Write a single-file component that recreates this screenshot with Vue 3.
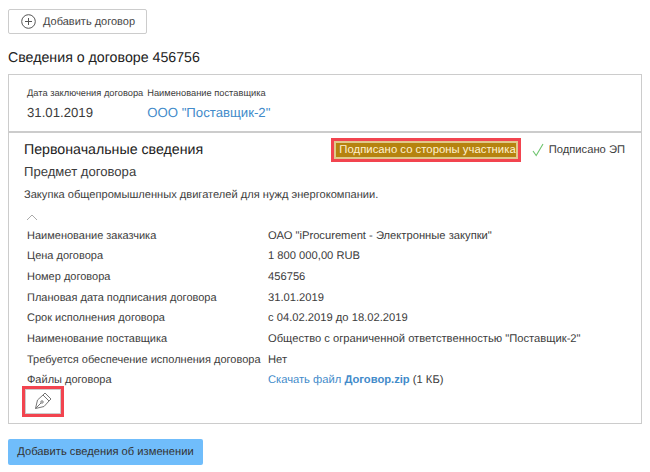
<template>
  <div class="page">
    <button class="add-btn">
      <svg class="plus" width="15" height="15" viewBox="0 0 15 15">
        <circle cx="7.5" cy="7.5" r="6.8" fill="none" stroke="#555" stroke-width="1" />
        <path d="M7.5 4v7M4 7.5h7" stroke="#555" stroke-width="1" fill="none" />
      </svg>
      <span>Добавить договор</span>
    </button>

    <h2 class="title">Сведения о договоре 456756</h2>

    <div class="card">
      <div class="head">
        <div class="head-col">
          <div class="head-label">Дата заключения договора</div>
          <div class="head-value">31.01.2019</div>
        </div>
        <div class="head-col">
          <div class="head-label">Наименование поставщика</div>
          <div class="head-value link">ООО "Поставщик-2"</div>
        </div>
      </div>

      <div class="body">
        <div class="status-row">
          <div class="section-title">Первоначальные сведения</div>
          <div class="status-right">
            <div class="mark-red">
              <span class="badge">Подписано со стороны участника</span>
            </div>
            <svg class="check" width="12" height="14" viewBox="0 0 12 14">
              <path d="M1 8l3.200 4.500L11 1" fill="none" stroke="#6fc46f" stroke-width="1.100" />
            </svg>
            <span class="signed">Подписано ЭП</span>
          </div>
        </div>

        <div class="subject-title">Предмет договора</div>
        <div class="subject">Закупка общепромышленных двигателей для нужд энергокомпании.</div>

        <svg class="chevron" width="12" height="7" viewBox="0 0 12 7">
          <path d="M1 6l5-5 5 5" fill="none" stroke="#aaa" stroke-width="1" />
        </svg>

        <div class="rows">
          <div v-for="row in rows" :key="row.label" class="row">
            <div class="row-label">{{ row.label }}</div>
            <div class="row-value">{{ row.value }}</div>
          </div>
          <div class="row">
            <div class="row-label">Файлы договора</div>
            <div class="row-value">
              <span class="file-link">Скачать файл <b>Договор.zip</b></span> (1 КБ)
            </div>
          </div>
        </div>

        <div class="pen-box">
          <svg width="18" height="18" viewBox="0 0 18 18">
            <g fill="none" stroke="#777" stroke-width="1">
              <path d="M1.500 16.500L3.500 8L9 3l6 6-5 5.500z" />
              <path d="M9 3l2-2 6 6-2 2" />
              <path d="M1.500 16.500L7 11" />
              <circle cx="8" cy="10" r="1.200" />
            </g>
          </svg>
        </div>
      </div>
    </div>

    <button class="bottom-btn">Добавить сведения об изменении</button>
  </div>
</template>

<script setup>
const rows = [
  { label: 'Наименование заказчика', value: 'ОАО "iProcurement - Электронные закупки"' },
  { label: 'Цена договора', value: '1 800 000,00 RUB' },
  { label: 'Номер договора', value: '456756' },
  { label: 'Плановая дата подписания договора', value: '31.01.2019' },
  { label: 'Срок исполнения договора', value: 'с 04.02.2019 до 18.02.2019' },
  { label: 'Наименование поставщика', value: 'Общество с ограниченной ответственностью "Поставщик-2"' },
  { label: 'Требуется обеспечение исполнения договора', value: 'Нет' }
]
</script>

<style>
body {
  background: #fff;
}
</style>

<style scoped>
.page {
  width: 650px;
  height: 472px;
  overflow: hidden;
  box-sizing: border-box;
  padding: 9px 8px 0;
  font-family: "Liberation Sans", Arial, sans-serif;
  text-rendering: geometricPrecision;
  color: #3c3c3c;
}

.add-btn {
  display: flex;
  align-items: center;
  gap: 7px;
  width: 139px;
  height: 25px;
  padding: 0 0 0 12px;
  box-sizing: border-box;
  background: #fff;
  border: 1px solid #ccc;
  border-radius: 2px;
  font: 11px "Liberation Sans", Arial, sans-serif;
  text-rendering: geometricPrecision;
  color: #444;
  white-space: nowrap;
}

.title {
  margin: 16px 0 0;
  font-size: 14.2px;
  font-weight: normal;
  line-height: 16px;
  color: #222;
}

.card {
  margin-top: 8px;
  width: 634px;
  height: 350px;
  box-sizing: border-box;
  border: 1px solid #ccc;
}

.head {
  display: flex;
  gap: 4px;
  height: 58px;
  box-sizing: border-box;
  padding: 11px 0 0 18px;
  border-bottom: 2px solid #ccc;
}

.head-label {
  font-size: 9.3px;
  line-height: 14px;
}

.head-value {
  margin-top: 5px;
  font-size: 13.2px;
  line-height: 16px;
}

.link {
  color: #428bca;
}

.body {
  padding: 0 16px 0 15px;
}

.status-row {
  display: flex;
  justify-content: space-between;
  align-items: center;
  height: 33px;
}

.section-title {
  font-size: 14.2px;
  color: #222;
}

.status-right {
  display: flex;
  align-items: center;
}

.mark-red {
  border: 3px solid #f2444f;
}

.badge {
  display: block;
  background: #b5830f;
  border: 2px solid #e0c98a;
  color: #fff2d0;
  font-size: 11.35px;
  line-height: 14px;
  padding: 0 0 0 3px;
}

.check {
  margin-left: 11px;
}

.signed {
  margin-left: 5px;
  font-size: 11.2px;
}

.subject-title {
  font-size: 13.1px;
  line-height: 15px;
  margin-top: -2px;
}

.subject {
  margin-top: 9px;
  font-size: 11.1px;
  line-height: 14px;
}

.chevron {
  display: block;
  margin: 12px 0 0 2px;
}

.rows {
  margin-top: 4.300px;
}

.row {
  display: flex;
  height: 20.7px;
  align-items: center;
  padding-left: 3px;
  font-size: 11.2px;
  white-space: nowrap;
}

.row-label {
  width: 241px;
  flex: none;
  font-size: 11px;
}

.file-link {
  color: #428bca;
}

.pen-box {
  position: relative;
  display: flex;
  align-items: center;
  justify-content: center;
  box-sizing: border-box;
  width: 42px;
  height: 31px;
  margin: -5px 0 0 -2px;
  border: 3px solid #f2444f;
  background: #fff;
  box-shadow: inset 0 0 0 1px #ccc;
}

.bottom-btn {
  display: block;
  margin-top: 15px;
  width: 195px;
  height: 26px;
  padding: 0;
  background: #70bdfb;
  border: 0;
  border-radius: 2px;
  font: 11.2px "Liberation Sans", Arial, sans-serif;
  text-rendering: geometricPrecision;
  color: #333;
}
</style>
